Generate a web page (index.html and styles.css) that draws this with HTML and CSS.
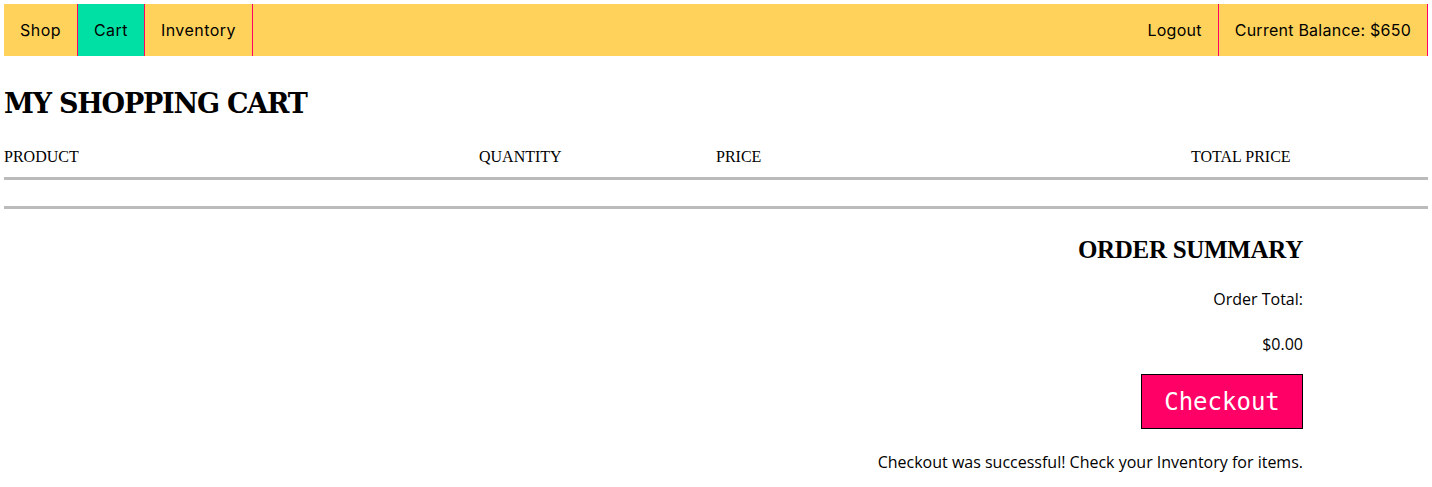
FILE: index.html
```html
<!DOCTYPE html>
<html>
<head>
<meta charset="utf-8">
<link rel="stylesheet" href="styles.css">
</head>
<body>
<nav class="nav">
  <div class="nav-left">
    <a class="nav-item">Shop</a>
    <a class="nav-item active">Cart</a>
    <a class="nav-item">Inventory</a>
  </div>
  <div class="nav-right">
    <a class="nav-item">Logout</a>
    <span class="nav-item">Current Balance: $650</span>
  </div>
</nav>
<h1 class="title">MY SHOPPING CART</h1>
<div class="cart-head">
  <span>PRODUCT</span>
  <span>QUANTITY</span>
  <span>PRICE</span>
  <span>TOTAL PRICE</span>
</div>
<div class="cart-body"></div>
<section class="summary">
  <h2 class="summary-title">ORDER SUMMARY</h2>
  <p class="summary-line">Order Total:</p>
  <p class="summary-line">$0.00</p>
  <button class="checkout">Checkout</button>
  <p class="message">Checkout was successful! Check your Inventory for items.</p>
</section>
</body>
</html>
```

FILE: styles.css
```css
* { box-sizing: border-box; }
body {
  margin: 4px;
  font-family: "Open Sans", sans-serif;
  color: #000;
  background: #fff;
}
.nav {
  display: flex;
  justify-content: space-between;
  background: #ffd35b;
  height: 52px;
  font-family: "Inter", "Lato", sans-serif;
  font-size: 16px;
  letter-spacing: 0.45px;
}
.nav-left, .nav-right { display: flex; }
.nav-right { letter-spacing: 0.25px; }
.nav-item {
  display: flex;
  align-items: center;
  padding: 0 16px;
  border-right: 1px solid #ff0066;
  cursor: pointer;
}
.nav-item.active { background: #00e0a4; }
.title {
  font-family: "DejaVu Serif", serif;
  font-weight: bold;
  font-size: 27px;
  letter-spacing: -1.2px;
  margin: 30px 0 0;
  line-height: 36px;
}
.cart-head {
  display: grid;
  grid-template-columns: 475px 237px 475px auto;
  font-family: "Liberation Serif", serif;
  font-size: 16px;
  margin-top: 26px;
  padding-bottom: 11px;
  border-bottom: 3px solid #bbbbbb;
}
.cart-body {
  height: 29px;
  border-bottom: 3px solid #bbbbbb;
}
.summary {
  display: flex;
  flex-direction: column;
  align-items: flex-end;
  padding-right: 125px;
  font-size: 16px;
}
.summary-title {
  font-family: "Liberation Serif", serif;
  font-weight: bold;
  font-size: 25px;
  letter-spacing: -0.3px;
  margin: 25px 0 0;
  line-height: 32px;
}
.summary-line {
  margin: 22px 0 0;
  line-height: 22px;
  font-size: 16px;
}
.summary-line + .summary-line { margin-top: 23px; }
.checkout {
  margin-top: 19px;
  width: 162px;
  height: 55px;
  background: #ff0066;
  color: #fff;
  border: 1px solid #000;
  font-family: "DejaVu Sans Mono", monospace;
  font-size: 24px;
  padding: 0;
}
.message {
  margin: 22px 0 0;
  font-size: 16px;
  line-height: 22px;
}
```
